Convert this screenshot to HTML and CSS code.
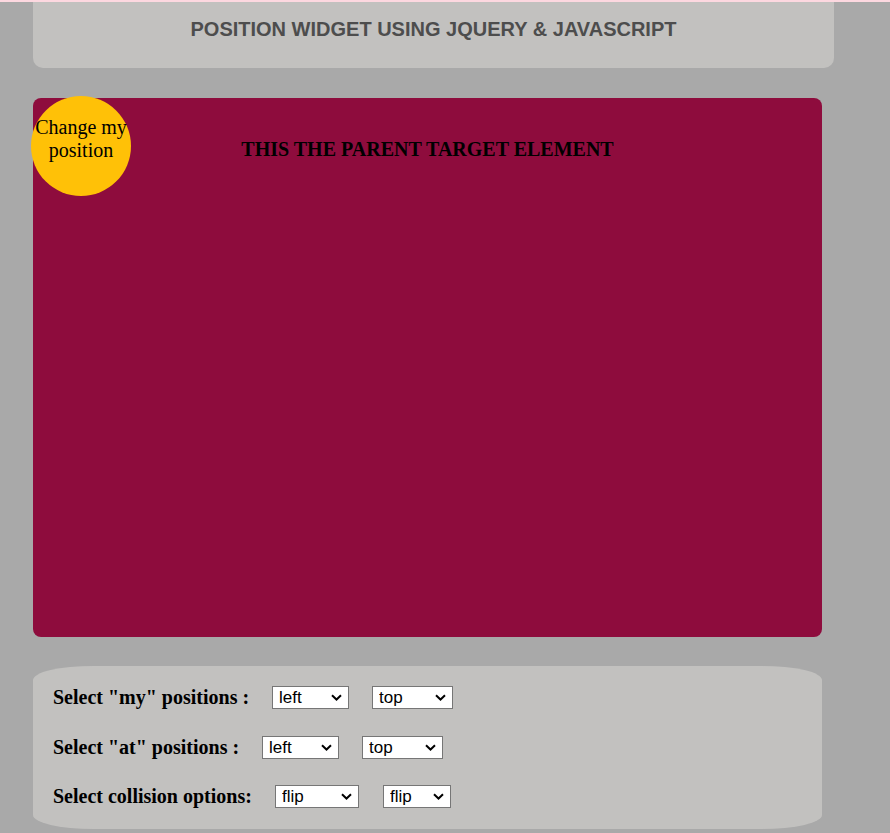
FILE: index.html
```html
<!DOCTYPE html>
<html>
<head>
<meta charset="utf-8">
<link rel="stylesheet" href="styles.css">
</head>
<body>
<div class="page">
  <header class="header"><h2>POSITION WIDGET USING JQUERY &amp; JAVASCRIPT</h2></header>
  <section class="target">
    <h3>THIS THE PARENT TARGET ELEMENT</h3>
    <div class="bubble">Change my position</div>
  </section>
  <section class="controls">
    <div class="row">
      <label class="lbl lbl-my">Select "my" positions :</label>
      <select class="sel w76"><option>left</option></select>
      <select class="sel w80"><option>top</option></select>
    </div>
    <div class="row">
      <label class="lbl lbl-at">Select "at" positions :</label>
      <select class="sel w76"><option>left</option></select>
      <select class="sel w80"><option>top</option></select>
    </div>
    <div class="row">
      <label class="lbl lbl-col">Select collision options:</label>
      <select class="sel w83 gap24"><option>flip</option></select>
      <select class="sel w67"><option>flip</option></select>
    </div>
  </section>
</div>
</body>
</html>
```
FILE: styles.css
```css
html, body { margin: 0; padding: 0; }
body {
  background: #a9a9a9;
  border-top: 2px solid #fdd8e0;
  height: 831px;
  overflow: hidden;
}
.page {
  padding: 0 33px;
}
.header {
  width: 801px;
  height: 66px;
  background: #c2c1bf;
  border-radius: 0 0 10px 10px;
  display: flex;
  justify-content: center;
}
.header h2 {
  margin: 16px 0 0;
  font-family: "Liberation Sans", Arial, sans-serif;
  font-weight: bold;
  font-size: 20px;
  color: #4d4d4d;
  line-height: 23px;
}
.target {
  position: relative;
  margin-top: 30px;
  width: 789px;
  height: 539px;
  background: #8e0c3d;
  border-radius: 8px;
}
.target h3 {
  margin: 0;
  padding-top: 40px;
  text-align: center;
  font-family: "Liberation Serif", "Times New Roman", serif;
  font-size: 20px;
  font-weight: bold;
  color: #000;
  line-height: 23px;
}
.bubble {
  position: absolute;
  left: -2px;
  top: -2px;
  width: 100px;
  height: 100px;
  box-sizing: border-box;
  padding-top: 20px;
  border-radius: 50%;
  background: #ffc107;
  text-align: center;
  font-family: "Liberation Serif", "Times New Roman", serif;
  font-size: 20px;
  line-height: 23px;
  color: #000;
}
.controls {
  margin-top: 29px;
  width: 789px;
  height: 163px;
  box-sizing: border-box;
  background: #c2c1bf;
  border-radius: 60px / 14px;
  padding: 20px 20px 0;
  display: flex;
  flex-direction: column;
  gap: 26.5px;
}
.row {
  display: flex;
  align-items: center;
  height: 23px;
}
.lbl {
  font-family: "Liberation Serif", "Times New Roman", serif;
  font-weight: bold;
  font-size: 20px;
  color: #000;
}
.lbl-my { width: 219px; }
.lbl-at { width: 209px; }
.lbl-col { width: 222px; }
.sel {
  -webkit-appearance: none;
  appearance: none;
  height: 23px;
  box-sizing: border-box;
  font-family: "Liberation Sans", Arial, sans-serif;
  font-size: 17px;
  line-height: 21px;
  background-color: #fff;
  background-image: url("data:image/svg+xml;utf8,<svg xmlns='http://www.w3.org/2000/svg' width='11' height='7' viewBox='0 0 11 7'><path d='M1 1.2 L5.5 5.5 L10 1.2' fill='none' stroke='black' stroke-width='2'/></svg>");
  background-repeat: no-repeat;
  background-position: right 6px center;
  border: 1px solid #767676;
  border-radius: 0;
  padding: 0 0 0 6px;
  margin-right: 23px;
  color: #000;
}
.gap24 { margin-right: 24px; }
.w76 { width: 77px; }
.w80 { width: 81px; }
.w83 { width: 84px; }
.w67 { width: 68px; }
```
